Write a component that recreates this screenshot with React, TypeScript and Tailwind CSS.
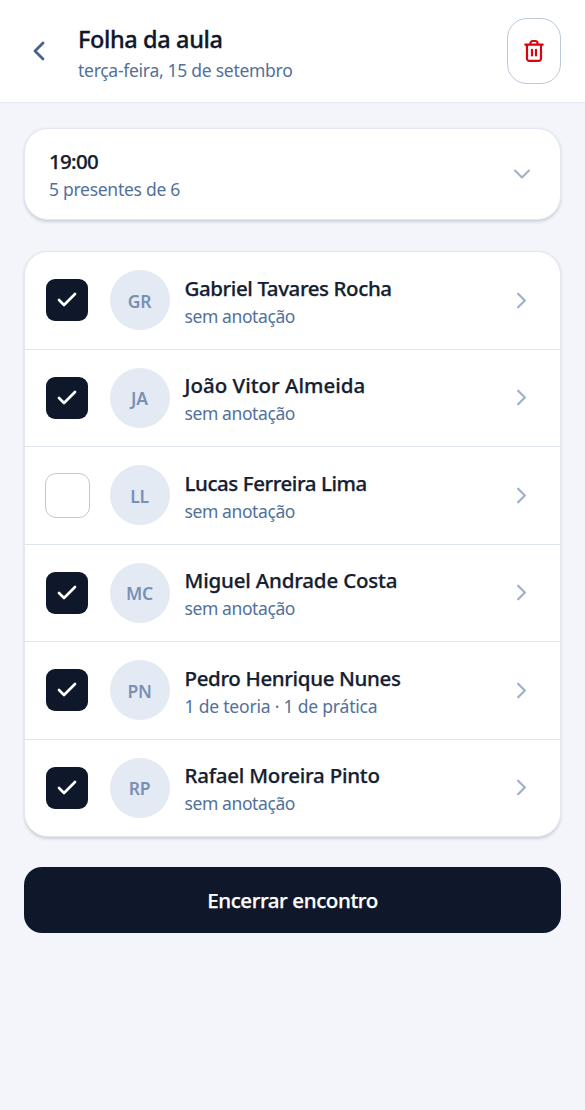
import React, { useState } from "react";
import { clsx } from "clsx";

type Student = {
  initials: string;
  name: string;
  note: string;
  present: boolean;
  tracking: string;
};

const initialStudents: Student[] = [
  {
    initials: "GR",
    name: "Gabriel Tavares Rocha",
    note: "sem anotação",
    present: true,
    tracking: "tracking-[-0.41px]",
  },
  {
    initials: "JA",
    name: "João Vitor Almeida",
    note: "sem anotação",
    present: true,
    tracking: "tracking-normal",
  },
  {
    initials: "LL",
    name: "Lucas Ferreira Lima",
    note: "sem anotação",
    present: false,
    tracking: "tracking-[-0.44px]",
  },
  {
    initials: "MC",
    name: "Miguel Andrade Costa",
    note: "sem anotação",
    present: true,
    tracking: "tracking-[-0.18px]",
  },
  {
    initials: "PN",
    name: "Pedro Henrique Nunes",
    note: "1 de teoria · 1 de prática",
    present: true,
    tracking: "tracking-[-0.36px]",
  },
  {
    initials: "RP",
    name: "Rafael Moreira Pinto",
    note: "sem anotação",
    present: true,
    tracking: "tracking-[-0.23px]",
  },
];

const Stroke = ({ d, className }: { d: string; className: string }) => (
  <svg
    viewBox="0 0 24 24"
    fill="none"
    stroke="currentColor"
    strokeLinecap="round"
    strokeLinejoin="round"
    className={className}
  >
    <path d={d} />
  </svg>
);

const TrashIcon = () => (
  <svg
    viewBox="0 0 24 24"
    fill="none"
    stroke="currentColor"
    strokeWidth="2.2"
    strokeLinecap="round"
    strokeLinejoin="round"
    className="size-6 text-[#d9040f]"
  >
    <path d="M3.3 5.6h17.4M19 5.6v14a2.3 2.3 0 0 1-2.3 2.3H7.3A2.3 2.3 0 0 1 5 19.6v-14M8.4 5.6V4.4a2.4 2.4 0 0 1 2.4-2.4h2.4a2.4 2.4 0 0 1 2.4 2.4v1.2M10 10.8v5.6M14 10.8v5.6" />
  </svg>
);

const StudentRow = ({
  student,
  onToggle,
}: {
  student: Student;
  onToggle: () => void;
}) => (
  <li className="flex h-[97.5px] items-center border-b border-[#dfe5ed] pr-[25px] pl-[19.5px] last:h-[96.5px] last:border-b-0">
    <button
      type="button"
      onClick={onToggle}
      aria-pressed={student.present}
      className="flex size-[45px] shrink-0 items-center justify-center"
    >
      <span
        className={clsx(
          "flex items-center justify-center",
          student.present
            ? "size-[42px] rounded-[9px] bg-[#0f172a] text-white"
            : "size-[45px] rounded-[11px] border border-[#b9cadb] bg-white"
        )}
      >
        {student.present && (
          <Stroke d="M20 6 9 17l-5-5" className="size-6 stroke-[2.7]" />
        )}
      </span>
    </button>
    <div className="ml-5 flex size-[60px] shrink-0 items-center justify-center rounded-full bg-[#e4eaf3] pt-px text-[17.5px] font-semibold tracking-[-0.2px] text-[#7890b5]">
      {student.initials}
    </div>
    <div className="ml-[15px] grow pt-[3px]">
      <p
        className={clsx(
          "text-[20.5px] leading-[28px] font-medium whitespace-nowrap text-[#14202f] [-webkit-text-stroke:0.25px]",
          student.tracking
        )}
      >
        {student.name}
      </p>
      <p
        className={clsx(
          "text-[17.5px] leading-[28px] whitespace-nowrap text-[#52719a]",
          student.note === "sem anotação" ? "tracking-[-0.4px]" : "tracking-[-0.2px]"
        )}
      >
        {student.note}
      </p>
    </div>
    <Stroke d="m9 18 6-6-6-6" className="size-[27px] stroke-2 text-[#a0b0c8]" />
  </li>
);

const App = () => {
  const [students, setStudents] = useState(initialStudents);
  const presentCount = students.filter((s) => s.present).length;

  const toggle = (index: number) => {
    setStudents((prev) =>
      prev.map((s, i) => (i === index ? { ...s, present: !s.present } : s))
    );
  };

  return (
    <div className="min-h-screen bg-[#f3f5fa] font-['Noto_Sans',sans-serif]">
      <header className="flex h-[103px] items-center border-b border-[#e4e9f1] bg-white pr-6 pl-[23px]">
        <Stroke d="m15 18-6-6 6-6" className="size-8 stroke-[2.1] text-[#46618c]" />
        <div className="ml-[23px] grow pt-[5px]">
          <h1 className="text-[23.5px] leading-[33px] font-medium tracking-[-0.38px] text-[#0f172a] [-webkit-text-stroke:0.3px]">
            Folha da aula
          </h1>
          <p className="text-[17.5px] leading-[28px] tracking-[-0.28px] text-[#52719a]">
            terça-feira, 15 de setembro
          </p>
        </div>
        <button
          type="button"
          aria-label="Excluir"
          className="flex h-[66px] w-[54px] items-center justify-center rounded-[20px] border border-[#b9cadb]"
        >
          <TrashIcon />
        </button>
      </header>

      <main className="px-6 pt-[25px]">
        <section className="flex h-[92px] items-center rounded-3xl border border-[#e4e9f1] bg-white px-6 shadow-[0_1.5px_3px_rgba(15,23,42,0.16)]">
          <div className="grow pt-[2px]">
            <h2 className="text-[20.5px] leading-[28px] font-medium tracking-[-0.7px] text-[#14202f] [-webkit-text-stroke:0.25px]">
              19:00
            </h2>
            <p className="text-[17.5px] leading-[28px] tracking-[-0.28px] text-[#52719a]">
              {presentCount} presentes de {students.length}
            </p>
          </div>
          <Stroke d="m6 9 6 6 6-6" className="size-[28px] stroke-[1.8] text-[#a0b0c8]" />
        </section>

        <ul className="mt-[31px] overflow-hidden rounded-3xl border border-[#e4e9f1] bg-white shadow-[0_1.5px_3px_rgba(15,23,42,0.16)]">
          {students.map((student, index) => (
            <StudentRow
              key={student.initials}
              student={student}
              onToggle={() => toggle(index)}
            />
          ))}
        </ul>

        <button
          type="button"
          className="mt-[30px] h-[66px] w-full rounded-[18px] bg-[#0f172a] text-[20.5px] font-medium tracking-[-0.4px] text-white [-webkit-text-stroke:0.25px]"
        >
          Encerrar encontro
        </button>
      </main>
    </div>
  );
};

export default App;
